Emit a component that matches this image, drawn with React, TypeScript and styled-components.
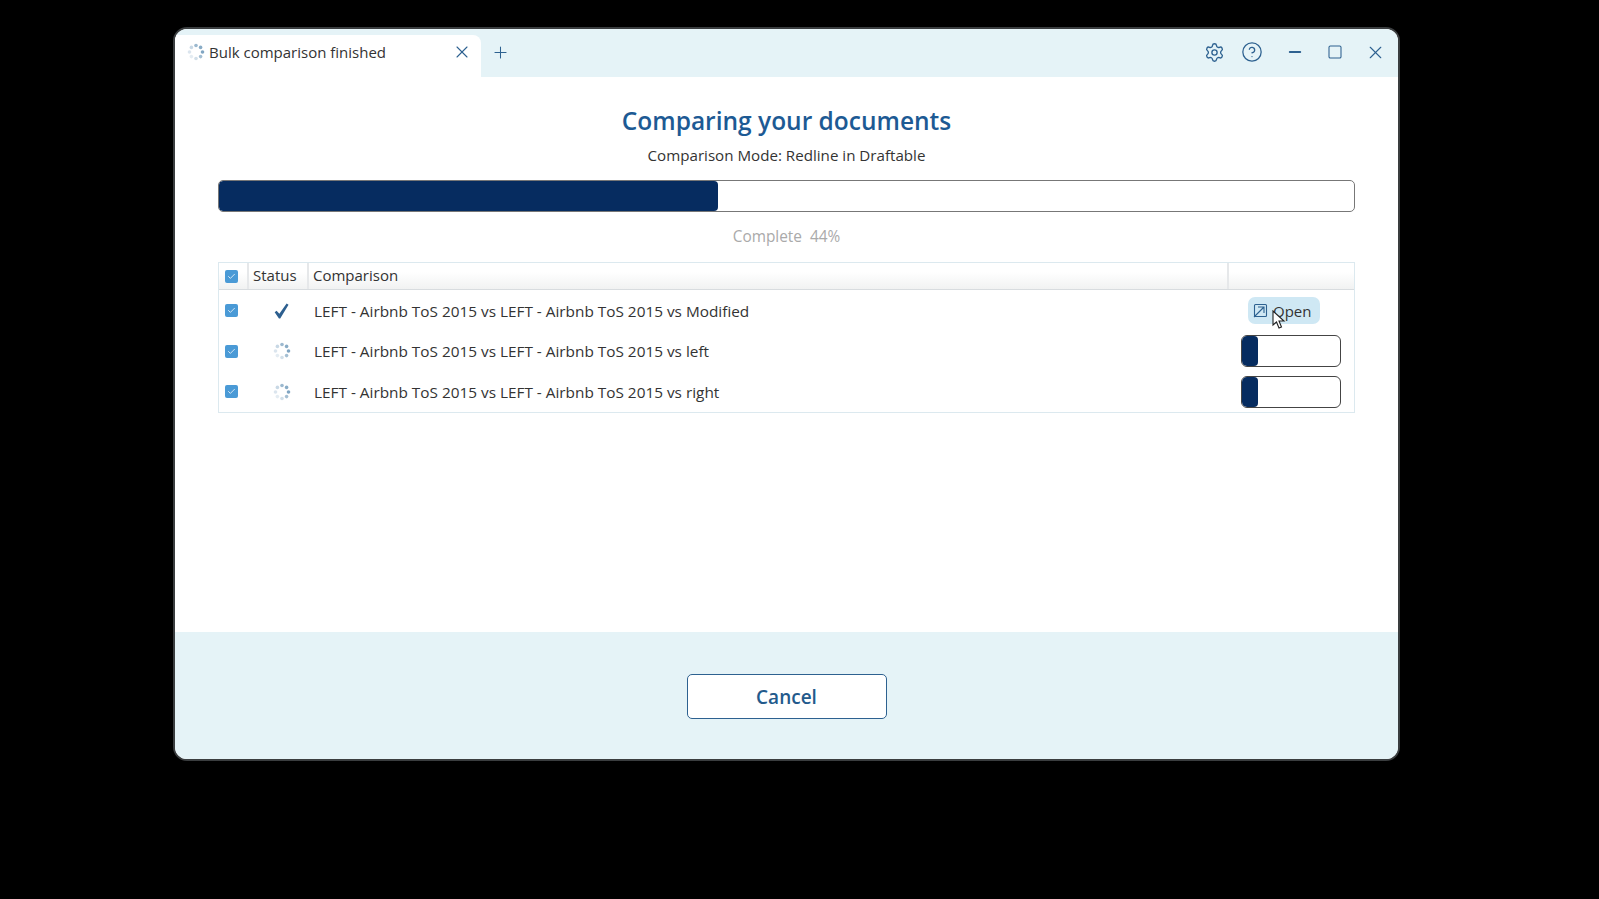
import React from "react";
import styled, { createGlobalStyle } from "styled-components";
import { Settings, CircleHelp, Minus, Square, X, Plus, Check } from "lucide-react";

const Global = createGlobalStyle`
  html, body { margin: 0; padding: 0; background: #000; }
  body { font-family: "Open Sans", "Noto Sans", "Liberation Sans", sans-serif; }
  * { box-sizing: border-box; }
`;

const Desktop = styled.div`
  width: 1599px;
  height: 899px;
  background: #000;
  padding: 27px 0 0 173px;
  overflow: hidden;
`;

const Win = styled.div`
  width: 1227px;
  height: 734px;
  background: #fff;
  border: 2px solid #3a3d3f;
  border-radius: 14px;
  overflow: hidden;
  display: flex;
  flex-direction: column;
`;

const TitleBar = styled.div`
  height: 48px;
  flex: none;
  background: #e5f3f7;
  display: flex;
  align-items: flex-end;
`;

const Tab = styled.div`
  width: 306px;
  height: 42px;
  background: #fff;
  border-radius: 0 8px 0 0;
  display: flex;
  align-items: center;
  padding: 0 9px 8px 12px;
  gap: 4px;
  font-size: 15px;
  color: #333;
`;

const TabLabel = styled.span`
  flex: 1;
`;

const IconButton = styled.span<{ $w?: number }>`
  width: ${(p) => p.$w ?? 20}px;
  height: 20px;
  display: inline-flex;
  align-items: center;
  justify-content: center;
  color: #2d6190;
`;

const AddTab = styled.div`
  height: 48px;
  width: 38px;
  padding-bottom: 2px;
  display: flex;
  align-items: center;
  justify-content: center;
  color: #2d6190;
`;

const Controls = styled.div`
  margin-left: auto;
  height: 48px;
  padding: 0 3px 2px 0;
  display: flex;
  align-items: center;
`;

const Main = styled.main`
  flex: 1;
  padding: 27px 43px 0 43px;
  display: flex;
  flex-direction: column;
  align-items: stretch;
`;

const Heading = styled.h1`
  margin: 0;
  font-size: 24.5px;
  line-height: 34px;
  font-weight: 600;
  text-align: center;
  color: #1d5a94;
`;

const Sub = styled.div`
  margin-top: 7px;
  font-size: 15.15px;
  line-height: 20px;
  text-align: center;
  color: #333;
`;

const Track = styled.div<{ $r: number }>`
  height: 32px;
  border: 1px solid #444;
  border-radius: ${(p) => p.$r}px;
  background: #fff;
  overflow: hidden;
`;

const Fill = styled.div`
  height: 100%;
  background: #062c60;
  border-radius: 4px;
`;

const MainTrack = styled(Track)`
  margin-top: 15px;
  border-color: #777;
`;

const Complete = styled.div`
  margin-top: 15px;
  font-size: 15.4px;
  line-height: 20px;
  text-align: center;
  color: #aaa;
  white-space: pre;
`;

const Table = styled.div`
  margin-top: 15px;
  border: 1px solid #dce9ef;
  display: flex;
  flex-direction: column;
`;

const HeadRow = styled.div`
  height: 27px;
  display: grid;
  grid-template-columns: 30px 60px 920px 1fr;
  background: linear-gradient(#ffffff 35%, #f1f2f2);
  border-bottom: 1px solid #d8dcdf;
`;

const HeadCell = styled.div`
  display: flex;
  align-items: center;
  padding: 0 0 2px 4px;
  border-right: 2px solid #e6e8ea;
  font-size: 15px;
  color: #333;
  &:last-child { border-right: none; }
`;

const HeadCheck = styled(HeadCell)`
  padding: 0 0 0 6px;
`;

const Body = styled.div`
  padding-top: 0.6px;
`;

const Row = styled.div`
  height: 40.5px;
  display: grid;
  grid-template-columns: 30px 65px 914px 1fr;
  align-items: center;
  font-size: 15.35px;
  color: #333;
`;

const CheckCell = styled.div`
  display: flex;
  align-items: center;
  padding-left: 6px;
`;

const StatusCell = styled.div`
  display: flex;
  align-items: center;
  justify-content: center;
`;

const NameCell = styled.div`
  white-space: nowrap;
`;

const Box = styled.span`
  width: 13px;
  height: 13px;
  border-radius: 2px;
  background: #4a9ad6;
  display: inline-flex;
  align-items: center;
  justify-content: center;
  color: #fff;
`;

const ActionCell = styled.div`
  position: relative;
  display: flex;
  padding-left: 20px;
`;

const MiniWrap = styled.div`
  width: 100px;
  margin-left: 13px;
`;

const OpenBtn = styled.div`
  width: 72px;
  height: 27px;
  background: #cfe8f4;
  border-radius: 7px;
  display: flex;
  align-items: center;
  padding-left: 5px;
  gap: 5px;
  font-size: 15px;
  color: #333;
`;

const Pointer = styled.svg`
  position: absolute;
  left: 44px;
  top: 13px;
`;

const Footer = styled.footer`
  height: 127px;
  flex: none;
  background: #e5f3f7;
  display: flex;
  align-items: flex-start;
  justify-content: center;
  padding-top: 42px;
`;

const CancelBtn = styled.button`
  width: 200px;
  height: 45px;
  background: #fff;
  border: 1px solid #2d6190;
  border-radius: 5px;
  font-family: inherit;
  font-size: 19px;
  font-weight: 600;
  color: #235a8c;
`;

function Spinner({ size = 18 }: { size?: number }) {
  const ops = [0.55, 0.65, 0.7, 0.5, 0.25, 0.15, 0.2, 0.3];
  return (
    <svg width={size} height={size} viewBox="0 0 18 18">
      {ops.map((o, i) => {
        const a = (i * Math.PI) / 4 - Math.PI / 2;
        return <circle key={i} cx={9 + 6.5 * Math.cos(a)} cy={9 + 6.5 * Math.sin(a)} r={1.8} fill="#4a7fa8" opacity={o} />;
      })}
    </svg>
  );
}

function Tick() {
  return (
    <Box>
      <Check size={9} strokeWidth={2} />
    </Box>
  );
}

function DoneMark() {
  return (
    <svg width="15" height="16" viewBox="0 0 14 15">
      <path d="M0.6 8.6 L2.4 7.2 L5 10 L11.8 0.4 L13.6 1.6 L5.8 14.6 L4.6 14.6 Z" fill="#2d5f8f" />
    </svg>
  );
}

function OpenIcon() {
  return (
    <svg width="15" height="15" viewBox="0 0 15 15" fill="none" stroke="#2d6190" strokeWidth="1.1">
      <rect x="1.5" y="1.5" width="12" height="12" rx="1" />
      <path d="M1 14 L11 4 M5 4 H11 V10" />
    </svg>
  );
}

const rows = [
  { name: "LEFT - Airbnb ToS 2015 vs LEFT - Airbnb ToS 2015 vs Modified", done: true },
  { name: "LEFT - Airbnb ToS 2015 vs LEFT - Airbnb ToS 2015 vs left", done: false },
  { name: "LEFT - Airbnb ToS 2015 vs LEFT - Airbnb ToS 2015 vs right", done: false },
];

export default function App() {
  return (
    <Desktop>
      <Global />
      <Win>
        <TitleBar>
          <Tab>
            <Spinner />
            <TabLabel>Bulk comparison finished</TabLabel>
            <IconButton><X size={20} strokeWidth={1.3} /></IconButton>
          </Tab>
          <AddTab><Plus size={19} strokeWidth={1.3} /></AddTab>
          <Controls>
            <IconButton $w={27}><Settings size={21} strokeWidth={1.5} /></IconButton>
            <IconButton $w={47}><CircleHelp size={22} strokeWidth={1.4} /></IconButton>
            <IconButton $w={40}><Minus size={18} strokeWidth={2.5} /></IconButton>
            <IconButton $w={40}><Square size={16} strokeWidth={1.6} /></IconButton>
            <IconButton $w={40}><X size={21} strokeWidth={1.3} /></IconButton>
          </Controls>
        </TitleBar>
        <Main>
          <Heading>Comparing your documents</Heading>
          <Sub>Comparison Mode: Redline in Draftable</Sub>
          <MainTrack $r={5}><Fill style={{ width: "44%" }} /></MainTrack>
          <Complete>Complete  44%</Complete>
          <Table>
            <HeadRow>
              <HeadCheck><Tick /></HeadCheck>
              <HeadCell>Status</HeadCell>
              <HeadCell>Comparison</HeadCell>
              <HeadCell />
            </HeadRow>
            <Body>
              {rows.map((r) => (
                <Row key={r.name}>
                  <CheckCell><Tick /></CheckCell>
                  <StatusCell>{r.done ? <DoneMark /> : <Spinner />}</StatusCell>
                  <NameCell>{r.name}</NameCell>
                  {r.done ? (
                    <ActionCell>
                      <OpenBtn>
                        <OpenIcon />
                        Open
                      </OpenBtn>
                      <Pointer width="14" height="20" viewBox="0 0 14 20">
                        <path d="M1 1 L1 15 L4.5 12 L7 18 L9.5 17 L7 11 L12 11 Z" fill="#fff" stroke="#222" strokeWidth="1.1" />
                      </Pointer>
                    </ActionCell>
                  ) : (
                    <MiniWrap>
                      <Track $r={6}><Fill style={{ width: "16%" }} /></Track>
                    </MiniWrap>
                  )}
                </Row>
              ))}
            </Body>
          </Table>
        </Main>
        <Footer><CancelBtn>Cancel</CancelBtn></Footer>
      </Win>
    </Desktop>
  );
}
